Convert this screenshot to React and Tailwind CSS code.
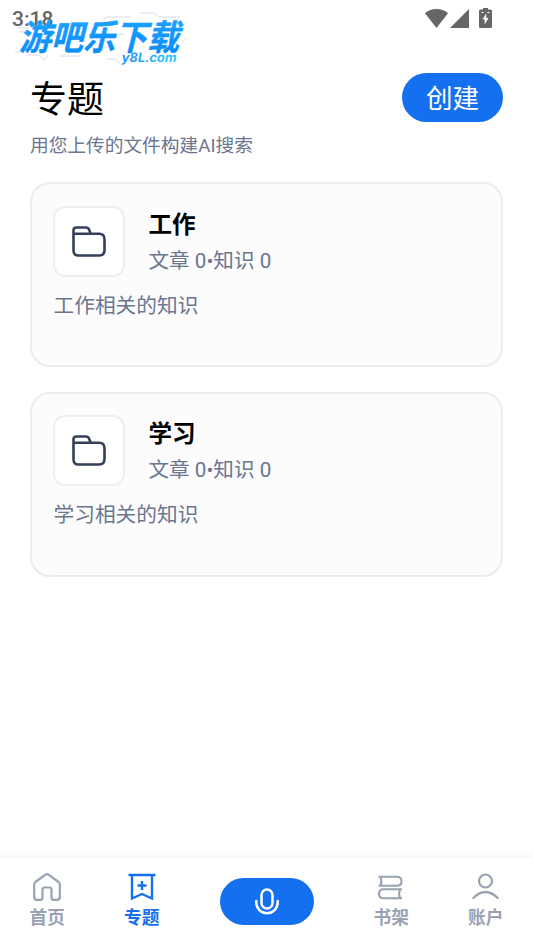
const topics = [
  { id: "work", title: "工作", articles: 0, facts: 0, description: "工作相关的知识" },
  { id: "study", title: "学习", articles: 0, facts: 0, description: "学习相关的知识" },
];

function StatusBar() {
  return (
    <div className="flex h-9 items-center justify-between pl-3 pr-[41px] text-[#666666]">
      <span className="pt-0.5 text-[21px] leading-9 font-medium font-[Roboto,sans-serif]">3:18</span>
      <div className="flex items-center">
        <svg className="h-[19px] w-[23px]" viewBox="0 0 23 19" fill="currentColor">
          <path d="M0 4.2C6.5-1.4 16.5-1.4 23 4.2L11.5 19z" />
        </svg>
        <svg className="ml-0.5 h-[19px] w-[19px]" viewBox="0 0 19 19" fill="currentColor">
          <path d="M0 19L19 0v19z" />
        </svg>
        <svg className="ml-[10px] h-5 w-[13px]" viewBox="0 0 13 20">
          <path fill="currentColor" d="M4 0h5v1.500h2.500A1.500 1.500 0 0 1 13 3v15.500a1.500 1.500 0 0 1-1.500 1.500h-10A1.500 1.500 0 0 1 0 18.500V3A1.500 1.500 0 0 1 1.500 1.500H4z" />
          <path fill="#fff" d="M7.300 5.500v4.500h2.200l-3.800 6.500v-5H3.500zM2.500 4h2v1h-2zM8.500 4h2v1h-2z" />
        </svg>
      </div>
    </div>
  );
}

function Watermark() {
  return (
    <div className="pointer-events-none absolute left-[15px] top-2 h-[60px] w-[176px]">
      <svg className="h-full w-full overflow-visible" viewBox="0 0 176 60" fill="none">
        <defs>
          <linearGradient id="brand" x1="0" y1="0" x2="0" y2="1">
            <stop offset="0" stopColor="#22a8ff" />
            <stop offset="1" stopColor="#0588fa" />
          </linearGradient>
          <linearGradient id="domain" x1="0" y1="0" x2="1" y2="0">
            <stop offset="0" stopColor="#2794f5" />
            <stop offset="1" stopColor="#38c6ff" />
          </linearGradient>
        </defs>
        <path
          stroke="#cfcbee"
          strokeWidth="0.8"
          d="M88 12l3-3h25M125 5h14l5 4h21M2 20h12M4 24h10M165 37l5-6M12 47h11l6 5M29 52l4-5M45 48h20M92 51h8l5 4M0 44h8M104 26h5"
        />
        <text
          transform="translate(4 42) skewX(-14) scale(1 1.060)"
          className="font-['Noto_Sans_CJK_SC',sans-serif] text-[33px] font-bold"
          textLength="160"
          lengthAdjust="spacingAndGlyphs"
          fill="url(#brand)"
          stroke="url(#brand)"
          strokeWidth="0.4"
        >
          游吧乐下载
        </text>
        <text
          transform="translate(106 53.500) skewX(-10)"
          className="font-[Inter,sans-serif] text-[13px] font-bold"
          textLength="55"
          lengthAdjust="spacingAndGlyphs"
          fill="url(#domain)"
        >
          y8L.com
        </text>
      </svg>
    </div>
  );
}

function FolderIcon() {
  return (
    <svg className="h-[31px] w-[34px]" viewBox="0 0 34 31" fill="none" stroke="#334058" strokeWidth="2.600" strokeLinejoin="round">
      <path d="M1.500 7.700V4.500Q1.500 1.500 4.500 1.500h9.500q2.200 0 3 2l1.800 4.200M1.500 7.700H27q5.500 0 5.500 5.500V24q0 5.500-5.500 5.500H6.500q-5 0-5-5z" />
    </svg>
  );
}

function TopicCard({ topic }) {
  return (
    <article className="h-[185px] rounded-[20px] border-2 border-[#ebebf1] bg-[#fcfcfc] p-[21.500px]">
      <div className="flex">
        <div className="-ml-px flex h-[71px] w-[72px] items-center justify-center rounded-xl border-2 border-[#efeff3] bg-white">
          <FolderIcon />
        </div>
        <div className="ml-6 pt-0.5">
          <h2 className="text-[23.600px] leading-[35px] font-bold text-black">{topic.title}</h2>
          <p className="mt-px text-[20.600px] leading-[35px] text-[#6b7690]">
            文章 {topic.articles}•知识 {topic.facts}
          </p>
        </div>
      </div>
      <p className="mt-[11px] text-[20.700px] leading-8 text-[#6b7690]">{topic.description}</p>
    </article>
  );
}

function HomeIcon() {
  return (
    <svg className="h-7 w-7" viewBox="0 0 28 28" fill="none" stroke="currentColor" strokeWidth="2.200" strokeLinejoin="round">
      <path d="M1.200 11.500q0-1.500 1.200-2.500L12.500 1.700q1.500-1 3 0L25.600 9q1.200 1 1.200 2.500V24q0 2.800-2.800 2.800h-3.500q-2 0-2-2V16.500q0-2-2-2h-5q-2 0-2 2v8.300q0 2-2 2H4Q1.200 26.800 1.200 24z" />
    </svg>
  );
}

function TopicIcon() {
  return (
    <svg className="h-7 w-7" viewBox="0 0 28 28" fill="none" stroke="currentColor" strokeWidth="2.400">
      <path d="M.5 2h27M4 2v23.500l10-4.500 10 4.500V2M14 8v9M9.500 12.500h9" />
    </svg>
  );
}

function ShelfIcon() {
  return (
    <svg className="h-7 w-7" viewBox="0 0 28 28" fill="none" stroke="currentColor" strokeWidth="2.100" strokeLinejoin="round">
      <path d="M1.500 3.800H20q4.500 0 4.500 4.500T20 12.800H1.500M3.500 3.800q1.800 4.500 0 9M25 16.300H6.500q-4.500 0-4.500 4.500t4.500 4.500H25M23 16.300q-1.800 4.500 0 9" />
    </svg>
  );
}

function AccountIcon() {
  return (
    <svg className="h-7 w-7" viewBox="0 0 28 28" fill="none" stroke="currentColor" strokeWidth="2.200" strokeLinecap="round">
      <circle cx="13.500" cy="8" r="6.500" />
      <path d="M1.300 25q12.200-12 24.400 0" />
    </svg>
  );
}

function NavItem({ icon: Icon, label, active }) {
  return (
    <button
      className={`flex w-[94.500px] flex-col items-center pt-[15px] ${active ? "text-[#1570ef]" : "text-[#98a2b3]"}`}
    >
      <Icon />
      <span className="mt-[3px] text-[17.700px] leading-7 font-bold">{label}</span>
    </button>
  );
}

function BottomNav() {
  return (
    <nav className="flex h-[91px] border-t border-[#f7f7f7] bg-white shadow-[0_-1px_3px_rgba(0,0,0,0.05)]">
      <NavItem icon={HomeIcon} label="首页" />
      <NavItem icon={TopicIcon} label="专题" active />
      <div className="flex flex-1 justify-center pt-5">
        <button className="flex h-[47px] w-[94px] items-center justify-center rounded-full bg-[#1570ef] text-white">
          <svg className="h-[27px] w-6" viewBox="0 0 24 27" fill="none" stroke="currentColor" strokeWidth="2.500" strokeLinecap="round">
            <rect x="6.500" y="1.500" width="11" height="19" rx="5.500" />
            <path d="M1.300 13v1.500a10.700 10.700 0 0 0 21.400 0V13" />
          </svg>
        </button>
      </div>
      <NavItem icon={ShelfIcon} label="书架" />
      <NavItem icon={AccountIcon} label="账户" />
    </nav>
  );
}

export default function App() {
  return (
    <div className="relative flex h-screen flex-col overflow-hidden bg-white font-[Roboto,'Noto_Sans_CJK_SC',sans-serif]">
      <StatusBar />
      <Watermark />

      <main className="flex-1 px-[30px] pt-[37px]">
        <header className="flex h-12 items-center justify-between">
          <h1 className="pt-2 text-[37px] leading-[48px] text-black">专题</h1>
          <button className="h-[49px] w-[101px] rounded-full bg-[#1570ef] pt-px text-[26.600px] leading-[49px] text-white">
            创建
          </button>
        </header>
        <p className="mt-[11px] text-[18.700px] leading-7 text-[#6b7690]">用您上传的文件构建AI搜索</p>

        <section className="mt-[22px] flex flex-col gap-[24.500px]">
          {topics.map((topic) => (
            <TopicCard key={topic.id} topic={topic} />
          ))}
        </section>
      </main>

      <BottomNav />
    </div>
  );
}
